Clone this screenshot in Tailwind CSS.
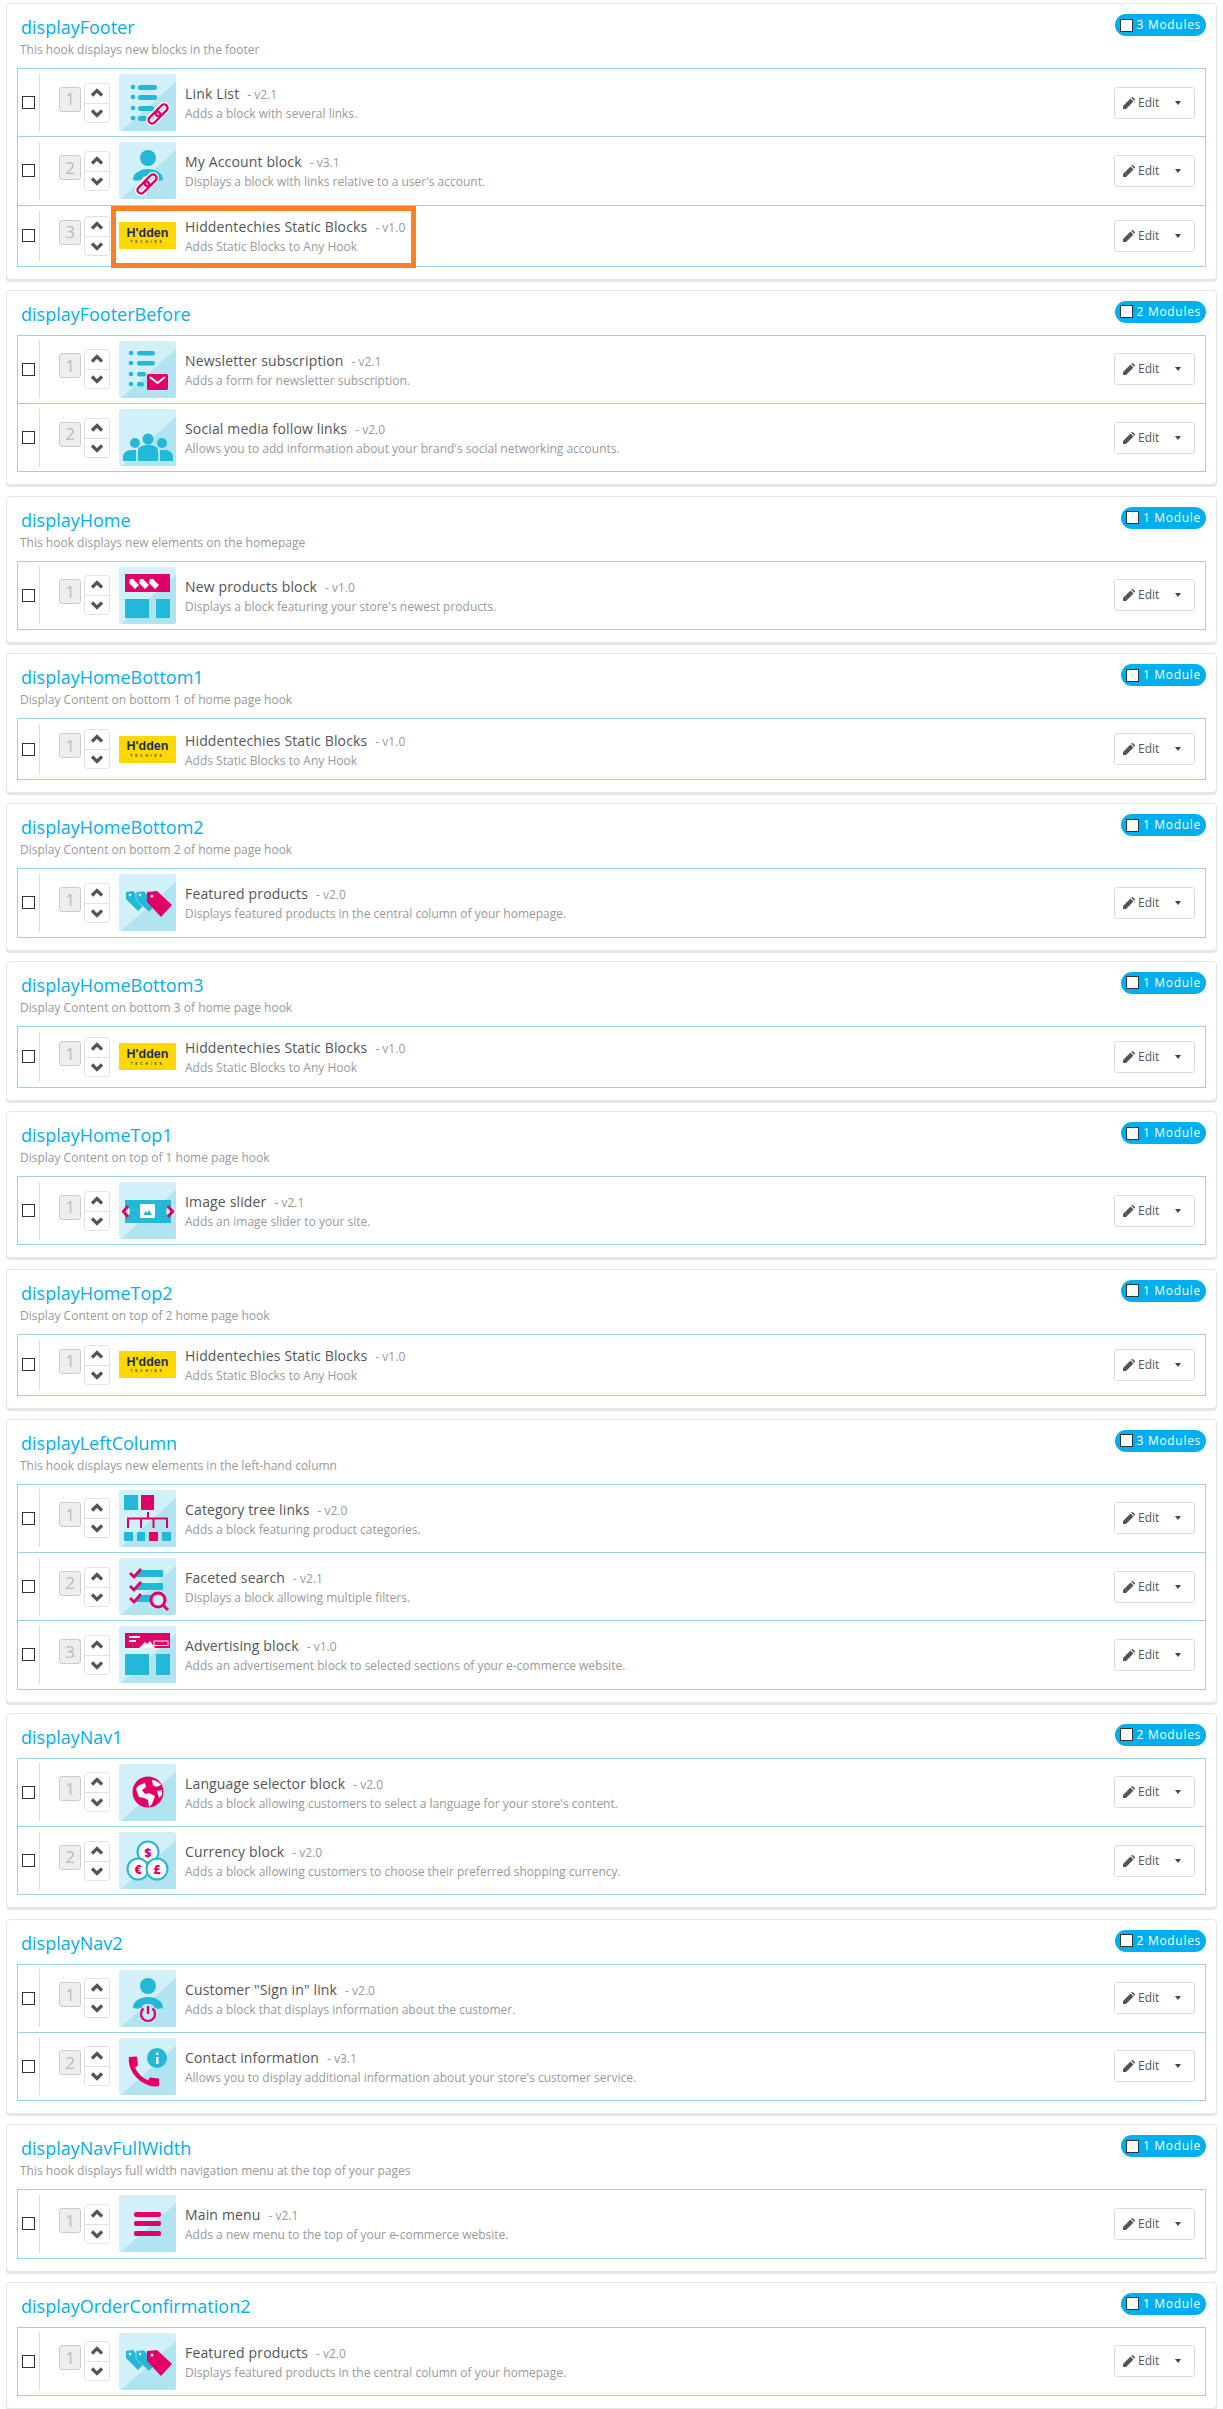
<!DOCTYPE html>
<html lang="en"><head><meta charset="utf-8"><title>Positions</title>
<script src="https://cdn.jsdelivr.net/npm/@tailwindcss/browser@4"></script></head>
<body class="bg-white font-['Open_Sans',sans-serif] text-[12px] text-[#999]">
<svg width="0" height="0" class="absolute">
<defs>
<symbol id="bg" viewBox="0 0 57 57"><rect width="57" height="57" rx="2" fill="#d2f0f7"/><path d="M57 8V55a2 2 0 0 1-2 2H2Z" fill="#afe4f0"/></symbol>
<symbol id="arrows" viewBox="0 0 26 40"><rect x=".5" y=".5" width="25" height="39" rx="3" fill="#fff" stroke="#e0e0e0"/><path d="M0 20.500H26" stroke="#e0e0e0"/><path d="M8 12.500l5-5 5 5M8 27.500l5 5 5-5" fill="none" stroke="#555" stroke-width="3.200"/></symbol>
<symbol id="pencil" viewBox="0 0 12 12"><path d="M0 12V9L7.500 1.500l3 3L3 12ZM8.300 .8l.8-.8h.6L12 2.300v.6l-.8.800Z" fill="#555"/></symbol>
<symbol id="link" viewBox="0 0 24 24"><g transform="rotate(-45 12 12)" fill="none"><g stroke="#fff" stroke-width="5"><rect x="0" y="8.500" width="14" height="7" rx="3.500"/><rect x="10" y="8.500" width="14" height="7" rx="3.500"/></g><g stroke="#e20067" stroke-width="2.400"><rect x="0" y="8.500" width="14" height="7" rx="3.500"/><rect x="10" y="8.500" width="14" height="7" rx="3.500"/></g></g></symbol>
<symbol id="linklist" viewBox="0 0 57 57"><use href="#bg"/><g fill="#23b7d8"><circle cx="14" cy="13" r="2.300"/><circle cx="14" cy="23" r="2.300"/><circle cx="14" cy="34" r="2.300"/><circle cx="14" cy="44" r="2.300"/><rect x="19" y="11" width="19" height="5" rx="2.500"/><rect x="19" y="21" width="19" height="5" rx="2.500"/><rect x="19" y="32" width="16" height="5" rx="2.500"/><rect x="19" y="42" width="9" height="5" rx="2.500"/></g><use href="#link" x="27" y="28" width="24" height="24"/></symbol>
<symbol id="account" viewBox="0 0 57 57"><use href="#bg"/><circle cx="29" cy="16" r="8" fill="#23b7d8"/><path d="M14 38c0-7 7-11 15-11s15 4 15 11c-3 1-8 1-9-1-1-3-3-3-6-3s-5 0-6 3c-1 2-6 2-9 1Z" fill="#23b7d8"/><use href="#link" x="16" y="30" width="24" height="24"/></symbol>
<symbol id="newsletter" viewBox="0 0 57 57"><use href="#bg"/><g fill="#23b7d8"><circle cx="12" cy="12" r="2.300"/><circle cx="12" cy="22" r="2.300"/><circle cx="12" cy="33" r="2.300"/><circle cx="12" cy="43" r="2.300"/><rect x="18" y="10" width="18" height="4.500" rx="2.200"/><rect x="18" y="20" width="18" height="4.500" rx="2.200"/><rect x="18" y="31" width="9" height="4.500" rx="2.200"/><rect x="18" y="41" width="7" height="4.500" rx="2.200"/></g><rect x="28" y="33" width="21" height="16" rx="1.500" fill="#e20067"/><path d="M31 36l7.500 6 7.500-6" fill="none" stroke="#fff" stroke-width="2"/></symbol>
<symbol id="social" viewBox="0 0 57 57"><use href="#bg"/><g fill="#23b7d8"><circle cx="16" cy="34" r="5"/><circle cx="29" cy="30" r="5.500"/><circle cx="43" cy="34" r="5"/><path d="M4 52v-4c0-4 4-7 8-7h5v11ZM19 52V42c0-4 4-6 10-6s10 2 10 6V52ZM41 41h5c4 0 8 3 8 7v4H41Z"/></g></symbol>
<symbol id="newproducts" viewBox="0 0 57 57"><use href="#bg"/><rect x="6" y="7" width="45" height="18" fill="#e20067"/><rect x="6" y="32" width="24" height="19" fill="#23b7d8"/><rect x="37" y="32" width="14" height="19" fill="#23b7d8"/><g fill="#fff"><path d="M11 12h3l6 6-4 4-6-6ZM21 12h3l6 6-4 4-6-6ZM31 12h3l6 6-4 4-6-6Z"/></g></symbol>
<symbol id="featured" viewBox="0 0 57 57"><use href="#bg"/><path d="M7 18l7-1 12 13-7 7-12-12Z" fill="#23b7d8"/><path d="M17 18l8-1 12 14-7 7-13-12Z" fill="#23b7d8" stroke="#b8e6f1" stroke-width=".6"/><path d="M28 18l10-1 15 14-11 12-14-15Z" fill="#e20067"/><circle cx="11" cy="21" r="1.300" fill="#fff"/><circle cx="21" cy="21" r="1.300" fill="#fff"/><circle cx="33" cy="22" r="1.500" fill="#fff"/></symbol>
<symbol id="slider" viewBox="0 0 57 57"><use href="#bg"/><rect x="6" y="18" width="46" height="23" fill="#23b7d8"/><circle cx="6" cy="29.500" r="5" fill="#d2f0f7"/><circle cx="52" cy="29.500" r="5" fill="#c4eaf3"/><path d="M9 24l-4.500 5.500L9 35M49 24l4.500 5.500L49 35" fill="none" stroke="#e20067" stroke-width="3"/><rect x="21" y="22" width="15" height="14" rx="1" fill="#fff"/><path d="M24 33l3-4 1.500 2 1.500-3 3 5Z" fill="#23b7d8"/></symbol>
<symbol id="category" viewBox="0 0 57 57"><use href="#bg"/><rect x="5" y="5" width="14" height="15" fill="#23b7d8"/><rect x="22" y="5" width="13" height="15" fill="#e20067"/><path d="M29 22v6M9 38V28.500H48V38M22 28.500V38M34.500 28.500V38" fill="none" stroke="#e20067" stroke-width="2"/><g fill="#23b7d8"><rect x="5" y="42" width="9" height="9"/><rect x="18" y="42" width="8" height="9"/><rect x="43" y="42" width="9" height="9"/></g><rect x="30" y="42" width="9" height="9" fill="#e20067"/></symbol>
<symbol id="faceted" viewBox="0 0 57 57"><use href="#bg"/><g fill="#23b7d8"><path d="M21 12H44V19H16ZM21 25H44V32H16ZM20 37H33V44H15Z"/></g><path d="M11 15l4 4 7-8M11 28l4 4 7-8M11 40l4 4 7-8" fill="none" stroke="#e20067" stroke-width="2.800"/><circle cx="39" cy="42" r="7" fill="#d2f0f7" stroke="#e20067" stroke-width="3"/><path d="M44 47l5 5" stroke="#e20067" stroke-width="3"/></symbol>
<symbol id="advert" viewBox="0 0 57 57"><use href="#bg"/><rect x="6" y="7" width="45" height="15" fill="#e20067"/><path d="M20 22l6-6 2 2 3-3 5 7Z" fill="#fff"/><rect x="10" y="10" width="11" height="2" fill="#fff"/><rect x="10" y="14" width="7" height="2" fill="#fff"/><rect x="35" y="15" width="14" height="4.500" fill="none" stroke="#fff"/><rect x="6" y="28" width="24" height="21" fill="#23b7d8"/><rect x="37" y="28" width="14" height="21" fill="#23b7d8"/></symbol>
<symbol id="globe" viewBox="0 0 57 57"><use href="#bg"/><circle cx="29" cy="28" r="15.500" fill="#e20067"/><path d="M17 25c2-4 6-5 9-6l1 4-4 3 3 4 4-1 6 3-3 8-3 3-1-7-4-2-5-1ZM33 16c3 0 7 2 9 5l-5 2-3-2ZM38 27l5-1 0 5-3 3Z" fill="#fff"/></symbol>
<symbol id="currency" viewBox="0 0 57 57"><use href="#bg"/><g fill="#fff" stroke="#23b7d8" stroke-width="2"><circle cx="29" cy="20" r="10.500"/><circle cx="19" cy="37" r="10.500"/><circle cx="38" cy="37" r="10.500"/></g><g fill="#e20067" font-family="'Open Sans',sans-serif" font-weight="800" font-size="12" text-anchor="middle"><text x="29" y="24.500">$</text><text x="19" y="41.500">€</text><text x="38" y="41.500">£</text></g></symbol>
<symbol id="signin" viewBox="0 0 57 57"><use href="#bg"/><circle cx="29" cy="16" r="8" fill="#23b7d8"/><path d="M14 38c0-7 7-11 15-11s15 4 15 11c-3 1-8 1-9-1-1-3-3-3-6-3s-5 0-6 3c-1 2-6 2-9 1Z" fill="#23b7d8"/><circle cx="29" cy="44" r="9" fill="#c4eaf3"/><path d="M24.500 38.500a7 7 0 1 0 9 0M29 36v8" fill="none" stroke="#e20067" stroke-width="2.300"/></symbol>
<symbol id="contact" viewBox="0 0 57 57"><use href="#bg"/><circle cx="38" cy="20" r="10" fill="#23b7d8"/><rect x="37" y="19" width="2.500" height="7" fill="#fff"/><rect x="37" y="14.500" width="2.500" height="2.500" fill="#fff"/><path d="M10 19l8-.5 1 9-3 2c3 6 7 10 13 13l2-3 9 1 0 7.500c-7 2-16-2-22-8S9 26 10 19Z" fill="#e20067"/></symbol>
<symbol id="menu" viewBox="0 0 57 57"><use href="#bg"/><g fill="#e20067"><rect x="15" y="17" width="27" height="5" rx="2"/><rect x="15" y="26" width="27" height="5" rx="2"/><rect x="15" y="36" width="27" height="5" rx="2"/></g></symbol>
</defs>
</svg>
<main class="px-[6px] pt-[3px] w-[1223px] flex flex-col gap-[10.250px]">

<section class="relative bg-white border border-[#e6e6e6] rounded-[4px] shadow-[0_2px_0_#e6e6e6] px-[10px] pb-[12px]">
<div class="flex items-start justify-between"><h2 class="ml-[4px] mt-[11px] text-[18px] leading-[24px] text-[#00aff0]">displayFooter</h2><div class="mt-[10px] flex items-center gap-[4px] h-[22px] rounded-full bg-[#00aff0] px-[5px] text-white tracking-[0.7px]"><span class="w-[13px] h-[13px] bg-white border border-[#333]"></span>3 Modules</div></div>
<p class="ml-[3px] mb-[7px] leading-[22px]">This hook displays new blocks in the footer</p>
<div class="border-x border-b border-[#9fd0e8]">
<div class="flex items-center h-[68.250px] border-t border-[#9fd0e8]"><span class="ml-[4px] w-[13px] h-[13px] border border-[#333] bg-white"></span><span class="ml-[4px] w-px h-[58px] bg-[#ddd]"></span><span class="ml-[19px] mb-[7px] flex items-center justify-center w-[22px] h-[25px] bg-[#eee] border border-[#ccc] rounded-[3px] text-[17px] text-[#bbb]">1</span><svg class="ml-[3px] w-[26px] h-[40px]"><use href="#arrows"/></svg><svg class="ml-[9px] w-[57px] h-[57px]"><use href="#linklist"/></svg><div class="ml-[9px] flex-1 pt-[2px]"><div class="leading-[19px]"><span class="text-[14px] tracking-[0.15px] text-[#555]">Link List</span><span class="ml-[8px]">- v2.1</span></div><div class="leading-[19px]">Adds a block with several links.</div></div><div class="mr-[10px] flex items-center w-[81px] h-[32px] border border-[#ddd] rounded-[3px] pl-[8px] text-[#555]"><svg class="w-[12px] h-[12px]"><use href="#pencil"/></svg><span class="ml-[3px]">Edit</span><span class="ml-[16px] border-x-[3.500px] border-t-[4px] border-x-transparent border-t-[#444]"></span></div></div>
<div class="flex items-center h-[68.250px] border-t border-[#9fd0e8]"><span class="ml-[4px] w-[13px] h-[13px] border border-[#333] bg-white"></span><span class="ml-[4px] w-px h-[58px] bg-[#ddd]"></span><span class="ml-[19px] mb-[7px] flex items-center justify-center w-[22px] h-[25px] bg-[#eee] border border-[#ccc] rounded-[3px] text-[17px] text-[#bbb]">2</span><svg class="ml-[3px] w-[26px] h-[40px]"><use href="#arrows"/></svg><svg class="ml-[9px] w-[57px] h-[57px]"><use href="#account"/></svg><div class="ml-[9px] flex-1 pt-[2px]"><div class="leading-[19px]"><span class="text-[14px] tracking-[0.15px] text-[#555]">My Account block</span><span class="ml-[8px]">- v3.1</span></div><div class="leading-[19px]">Displays a block with links relative to a user's account.</div></div><div class="mr-[10px] flex items-center w-[81px] h-[32px] border border-[#ddd] rounded-[3px] pl-[8px] text-[#555]"><svg class="w-[12px] h-[12px]"><use href="#pencil"/></svg><span class="ml-[3px]">Edit</span><span class="ml-[16px] border-x-[3.500px] border-t-[4px] border-x-transparent border-t-[#444]"></span></div></div>
<div class="flex items-center h-[61px] border-t border-[#9fd0e8]"><span class="ml-[4px] w-[13px] h-[13px] border border-[#333] bg-white"></span><span class="ml-[4px] w-px h-[50px] bg-[#ddd]"></span><span class="ml-[19px] mb-[7px] flex items-center justify-center w-[22px] h-[25px] bg-[#eee] border border-[#ccc] rounded-[3px] text-[17px] text-[#bbb]">3</span><svg class="ml-[3px] w-[26px] h-[40px]"><use href="#arrows"/></svg><div class="ml-[9px] w-[57px] h-[27px] bg-[#ffd800] flex flex-col items-center justify-center text-[#1a2c5a] leading-none font-['Liberation_Sans',sans-serif]"><span class="text-[12.500px] font-bold">H'dden</span><span class="text-[3px] tracking-[3px] font-bold mt-[2px]">TECHIES</span></div><div class="ml-[9px] flex-1 pt-[2px]"><div class="leading-[19px]"><span class="text-[14px] tracking-[0.15px] text-[#555]">Hiddentechies Static Blocks</span><span class="ml-[8px]">- v1.0</span></div><div class="leading-[19px]">Adds Static Blocks to Any Hook</div></div><div class="mr-[10px] flex items-center w-[81px] h-[32px] border border-[#ddd] rounded-[3px] pl-[8px] text-[#555]"><svg class="w-[12px] h-[12px]"><use href="#pencil"/></svg><span class="ml-[3px]">Edit</span><span class="ml-[16px] border-x-[3.500px] border-t-[4px] border-x-transparent border-t-[#444]"></span></div></div>
</div>
<div class="absolute left-[104px] top-[202px] w-[305px] h-[62px] border-[5px] border-[#ff7f27]"></div>
</section>

<section class="bg-white border border-[#e6e6e6] rounded-[4px] shadow-[0_2px_0_#e6e6e6] px-[10px] pb-[12px]">
<div class="flex items-start justify-between mb-[9px]"><h2 class="ml-[4px] mt-[11px] text-[18px] leading-[24px] text-[#00aff0]">displayFooterBefore</h2><div class="mt-[10px] flex items-center gap-[4px] h-[22px] rounded-full bg-[#00aff0] px-[5px] text-white tracking-[0.7px]"><span class="w-[13px] h-[13px] bg-white border border-[#333]"></span>2 Modules</div></div>
<div class="border-x border-b border-[#9fd0e8]">
<div class="flex items-center h-[68.250px] border-t border-[#9fd0e8]"><span class="ml-[4px] w-[13px] h-[13px] border border-[#333] bg-white"></span><span class="ml-[4px] w-px h-[58px] bg-[#ddd]"></span><span class="ml-[19px] mb-[7px] flex items-center justify-center w-[22px] h-[25px] bg-[#eee] border border-[#ccc] rounded-[3px] text-[17px] text-[#bbb]">1</span><svg class="ml-[3px] w-[26px] h-[40px]"><use href="#arrows"/></svg><svg class="ml-[9px] w-[57px] h-[57px]"><use href="#newsletter"/></svg><div class="ml-[9px] flex-1 pt-[2px]"><div class="leading-[19px]"><span class="text-[14px] tracking-[0.15px] text-[#555]">Newsletter subscription</span><span class="ml-[8px]">- v2.1</span></div><div class="leading-[19px]">Adds a form for newsletter subscription.</div></div><div class="mr-[10px] flex items-center w-[81px] h-[32px] border border-[#ddd] rounded-[3px] pl-[8px] text-[#555]"><svg class="w-[12px] h-[12px]"><use href="#pencil"/></svg><span class="ml-[3px]">Edit</span><span class="ml-[16px] border-x-[3.500px] border-t-[4px] border-x-transparent border-t-[#444]"></span></div></div>
<div class="flex items-center h-[68.250px] border-t border-[#9fd0e8]"><span class="ml-[4px] w-[13px] h-[13px] border border-[#333] bg-white"></span><span class="ml-[4px] w-px h-[58px] bg-[#ddd]"></span><span class="ml-[19px] mb-[7px] flex items-center justify-center w-[22px] h-[25px] bg-[#eee] border border-[#ccc] rounded-[3px] text-[17px] text-[#bbb]">2</span><svg class="ml-[3px] w-[26px] h-[40px]"><use href="#arrows"/></svg><svg class="ml-[9px] w-[57px] h-[57px]"><use href="#social"/></svg><div class="ml-[9px] flex-1 pt-[2px]"><div class="leading-[19px]"><span class="text-[14px] tracking-[0.15px] text-[#555]">Social media follow links</span><span class="ml-[8px]">- v2.0</span></div><div class="leading-[19px]">Allows you to add information about your brand's social networking accounts.</div></div><div class="mr-[10px] flex items-center w-[81px] h-[32px] border border-[#ddd] rounded-[3px] pl-[8px] text-[#555]"><svg class="w-[12px] h-[12px]"><use href="#pencil"/></svg><span class="ml-[3px]">Edit</span><span class="ml-[16px] border-x-[3.500px] border-t-[4px] border-x-transparent border-t-[#444]"></span></div></div>
</div>
</section>

<section class="bg-white border border-[#e6e6e6] rounded-[4px] shadow-[0_2px_0_#e6e6e6] px-[10px] pb-[12px]">
<div class="flex items-start justify-between"><h2 class="ml-[4px] mt-[11px] text-[18px] leading-[24px] text-[#00aff0]">displayHome</h2><div class="mt-[10px] flex items-center gap-[4px] h-[22px] rounded-full bg-[#00aff0] px-[5px] text-white tracking-[0.7px]"><span class="w-[13px] h-[13px] bg-white border border-[#333]"></span>1 Module</div></div>
<p class="ml-[3px] mb-[7px] leading-[22px]">This hook displays new elements on the homepage</p>
<div class="border-x border-b border-[#9fd0e8]">
<div class="flex items-center h-[68.250px] border-t border-[#9fd0e8]"><span class="ml-[4px] w-[13px] h-[13px] border border-[#333] bg-white"></span><span class="ml-[4px] w-px h-[58px] bg-[#ddd]"></span><span class="ml-[19px] mb-[7px] flex items-center justify-center w-[22px] h-[25px] bg-[#eee] border border-[#ccc] rounded-[3px] text-[17px] text-[#bbb]">1</span><svg class="ml-[3px] w-[26px] h-[40px]"><use href="#arrows"/></svg><svg class="ml-[9px] w-[57px] h-[57px]"><use href="#newproducts"/></svg><div class="ml-[9px] flex-1 pt-[2px]"><div class="leading-[19px]"><span class="text-[14px] tracking-[0.15px] text-[#555]">New products block</span><span class="ml-[8px]">- v1.0</span></div><div class="leading-[19px]">Displays a block featuring your store's newest products.</div></div><div class="mr-[10px] flex items-center w-[81px] h-[32px] border border-[#ddd] rounded-[3px] pl-[8px] text-[#555]"><svg class="w-[12px] h-[12px]"><use href="#pencil"/></svg><span class="ml-[3px]">Edit</span><span class="ml-[16px] border-x-[3.500px] border-t-[4px] border-x-transparent border-t-[#444]"></span></div></div>
</div>
</section>

<section class="bg-white border border-[#e6e6e6] rounded-[4px] shadow-[0_2px_0_#e6e6e6] px-[10px] pb-[12px]">
<div class="flex items-start justify-between"><h2 class="ml-[4px] mt-[11px] text-[18px] leading-[24px] text-[#00aff0]">displayHomeBottom1</h2><div class="mt-[10px] flex items-center gap-[4px] h-[22px] rounded-full bg-[#00aff0] px-[5px] text-white tracking-[0.7px]"><span class="w-[13px] h-[13px] bg-white border border-[#333]"></span>1 Module</div></div>
<p class="ml-[3px] mb-[7px] leading-[22px]">Display Content on bottom 1 of home page hook</p>
<div class="border-x border-b border-[#9fd0e8]">
<div class="flex items-center h-[61px] border-t border-[#9fd0e8]"><span class="ml-[4px] w-[13px] h-[13px] border border-[#333] bg-white"></span><span class="ml-[4px] w-px h-[50px] bg-[#ddd]"></span><span class="ml-[19px] mb-[7px] flex items-center justify-center w-[22px] h-[25px] bg-[#eee] border border-[#ccc] rounded-[3px] text-[17px] text-[#bbb]">1</span><svg class="ml-[3px] w-[26px] h-[40px]"><use href="#arrows"/></svg><div class="ml-[9px] w-[57px] h-[27px] bg-[#ffd800] flex flex-col items-center justify-center text-[#1a2c5a] leading-none font-['Liberation_Sans',sans-serif]"><span class="text-[12.500px] font-bold">H'dden</span><span class="text-[3px] tracking-[3px] font-bold mt-[2px]">TECHIES</span></div><div class="ml-[9px] flex-1 pt-[2px]"><div class="leading-[19px]"><span class="text-[14px] tracking-[0.15px] text-[#555]">Hiddentechies Static Blocks</span><span class="ml-[8px]">- v1.0</span></div><div class="leading-[19px]">Adds Static Blocks to Any Hook</div></div><div class="mr-[10px] flex items-center w-[81px] h-[32px] border border-[#ddd] rounded-[3px] pl-[8px] text-[#555]"><svg class="w-[12px] h-[12px]"><use href="#pencil"/></svg><span class="ml-[3px]">Edit</span><span class="ml-[16px] border-x-[3.500px] border-t-[4px] border-x-transparent border-t-[#444]"></span></div></div>
</div>
</section>

<section class="bg-white border border-[#e6e6e6] rounded-[4px] shadow-[0_2px_0_#e6e6e6] px-[10px] pb-[12px]">
<div class="flex items-start justify-between"><h2 class="ml-[4px] mt-[11px] text-[18px] leading-[24px] text-[#00aff0]">displayHomeBottom2</h2><div class="mt-[10px] flex items-center gap-[4px] h-[22px] rounded-full bg-[#00aff0] px-[5px] text-white tracking-[0.7px]"><span class="w-[13px] h-[13px] bg-white border border-[#333]"></span>1 Module</div></div>
<p class="ml-[3px] mb-[7px] leading-[22px]">Display Content on bottom 2 of home page hook</p>
<div class="border-x border-b border-[#9fd0e8]">
<div class="flex items-center h-[68.250px] border-t border-[#9fd0e8]"><span class="ml-[4px] w-[13px] h-[13px] border border-[#333] bg-white"></span><span class="ml-[4px] w-px h-[58px] bg-[#ddd]"></span><span class="ml-[19px] mb-[7px] flex items-center justify-center w-[22px] h-[25px] bg-[#eee] border border-[#ccc] rounded-[3px] text-[17px] text-[#bbb]">1</span><svg class="ml-[3px] w-[26px] h-[40px]"><use href="#arrows"/></svg><svg class="ml-[9px] w-[57px] h-[57px]"><use href="#featured"/></svg><div class="ml-[9px] flex-1 pt-[2px]"><div class="leading-[19px]"><span class="text-[14px] tracking-[0.15px] text-[#555]">Featured products</span><span class="ml-[8px]">- v2.0</span></div><div class="leading-[19px]">Displays featured products in the central column of your homepage.</div></div><div class="mr-[10px] flex items-center w-[81px] h-[32px] border border-[#ddd] rounded-[3px] pl-[8px] text-[#555]"><svg class="w-[12px] h-[12px]"><use href="#pencil"/></svg><span class="ml-[3px]">Edit</span><span class="ml-[16px] border-x-[3.500px] border-t-[4px] border-x-transparent border-t-[#444]"></span></div></div>
</div>
</section>

<section class="bg-white border border-[#e6e6e6] rounded-[4px] shadow-[0_2px_0_#e6e6e6] px-[10px] pb-[12px]">
<div class="flex items-start justify-between"><h2 class="ml-[4px] mt-[11px] text-[18px] leading-[24px] text-[#00aff0]">displayHomeBottom3</h2><div class="mt-[10px] flex items-center gap-[4px] h-[22px] rounded-full bg-[#00aff0] px-[5px] text-white tracking-[0.7px]"><span class="w-[13px] h-[13px] bg-white border border-[#333]"></span>1 Module</div></div>
<p class="ml-[3px] mb-[7px] leading-[22px]">Display Content on bottom 3 of home page hook</p>
<div class="border-x border-b border-[#9fd0e8]">
<div class="flex items-center h-[61px] border-t border-[#9fd0e8]"><span class="ml-[4px] w-[13px] h-[13px] border border-[#333] bg-white"></span><span class="ml-[4px] w-px h-[50px] bg-[#ddd]"></span><span class="ml-[19px] mb-[7px] flex items-center justify-center w-[22px] h-[25px] bg-[#eee] border border-[#ccc] rounded-[3px] text-[17px] text-[#bbb]">1</span><svg class="ml-[3px] w-[26px] h-[40px]"><use href="#arrows"/></svg><div class="ml-[9px] w-[57px] h-[27px] bg-[#ffd800] flex flex-col items-center justify-center text-[#1a2c5a] leading-none font-['Liberation_Sans',sans-serif]"><span class="text-[12.500px] font-bold">H'dden</span><span class="text-[3px] tracking-[3px] font-bold mt-[2px]">TECHIES</span></div><div class="ml-[9px] flex-1 pt-[2px]"><div class="leading-[19px]"><span class="text-[14px] tracking-[0.15px] text-[#555]">Hiddentechies Static Blocks</span><span class="ml-[8px]">- v1.0</span></div><div class="leading-[19px]">Adds Static Blocks to Any Hook</div></div><div class="mr-[10px] flex items-center w-[81px] h-[32px] border border-[#ddd] rounded-[3px] pl-[8px] text-[#555]"><svg class="w-[12px] h-[12px]"><use href="#pencil"/></svg><span class="ml-[3px]">Edit</span><span class="ml-[16px] border-x-[3.500px] border-t-[4px] border-x-transparent border-t-[#444]"></span></div></div>
</div>
</section>

<section class="bg-white border border-[#e6e6e6] rounded-[4px] shadow-[0_2px_0_#e6e6e6] px-[10px] pb-[12px]">
<div class="flex items-start justify-between"><h2 class="ml-[4px] mt-[11px] text-[18px] leading-[24px] text-[#00aff0]">displayHomeTop1</h2><div class="mt-[10px] flex items-center gap-[4px] h-[22px] rounded-full bg-[#00aff0] px-[5px] text-white tracking-[0.7px]"><span class="w-[13px] h-[13px] bg-white border border-[#333]"></span>1 Module</div></div>
<p class="ml-[3px] mb-[7px] leading-[22px]">Display Content on top of 1 home page hook</p>
<div class="border-x border-b border-[#9fd0e8]">
<div class="flex items-center h-[68.250px] border-t border-[#9fd0e8]"><span class="ml-[4px] w-[13px] h-[13px] border border-[#333] bg-white"></span><span class="ml-[4px] w-px h-[58px] bg-[#ddd]"></span><span class="ml-[19px] mb-[7px] flex items-center justify-center w-[22px] h-[25px] bg-[#eee] border border-[#ccc] rounded-[3px] text-[17px] text-[#bbb]">1</span><svg class="ml-[3px] w-[26px] h-[40px]"><use href="#arrows"/></svg><svg class="ml-[9px] w-[57px] h-[57px]"><use href="#slider"/></svg><div class="ml-[9px] flex-1 pt-[2px]"><div class="leading-[19px]"><span class="text-[14px] tracking-[0.15px] text-[#555]">Image slider</span><span class="ml-[8px]">- v2.1</span></div><div class="leading-[19px]">Adds an image slider to your site.</div></div><div class="mr-[10px] flex items-center w-[81px] h-[32px] border border-[#ddd] rounded-[3px] pl-[8px] text-[#555]"><svg class="w-[12px] h-[12px]"><use href="#pencil"/></svg><span class="ml-[3px]">Edit</span><span class="ml-[16px] border-x-[3.500px] border-t-[4px] border-x-transparent border-t-[#444]"></span></div></div>
</div>
</section>

<section class="bg-white border border-[#e6e6e6] rounded-[4px] shadow-[0_2px_0_#e6e6e6] px-[10px] pb-[12px]">
<div class="flex items-start justify-between"><h2 class="ml-[4px] mt-[11px] text-[18px] leading-[24px] text-[#00aff0]">displayHomeTop2</h2><div class="mt-[10px] flex items-center gap-[4px] h-[22px] rounded-full bg-[#00aff0] px-[5px] text-white tracking-[0.7px]"><span class="w-[13px] h-[13px] bg-white border border-[#333]"></span>1 Module</div></div>
<p class="ml-[3px] mb-[7px] leading-[22px]">Display Content on top of 2 home page hook</p>
<div class="border-x border-b border-[#9fd0e8]">
<div class="flex items-center h-[61px] border-t border-[#9fd0e8]"><span class="ml-[4px] w-[13px] h-[13px] border border-[#333] bg-white"></span><span class="ml-[4px] w-px h-[50px] bg-[#ddd]"></span><span class="ml-[19px] mb-[7px] flex items-center justify-center w-[22px] h-[25px] bg-[#eee] border border-[#ccc] rounded-[3px] text-[17px] text-[#bbb]">1</span><svg class="ml-[3px] w-[26px] h-[40px]"><use href="#arrows"/></svg><div class="ml-[9px] w-[57px] h-[27px] bg-[#ffd800] flex flex-col items-center justify-center text-[#1a2c5a] leading-none font-['Liberation_Sans',sans-serif]"><span class="text-[12.500px] font-bold">H'dden</span><span class="text-[3px] tracking-[3px] font-bold mt-[2px]">TECHIES</span></div><div class="ml-[9px] flex-1 pt-[2px]"><div class="leading-[19px]"><span class="text-[14px] tracking-[0.15px] text-[#555]">Hiddentechies Static Blocks</span><span class="ml-[8px]">- v1.0</span></div><div class="leading-[19px]">Adds Static Blocks to Any Hook</div></div><div class="mr-[10px] flex items-center w-[81px] h-[32px] border border-[#ddd] rounded-[3px] pl-[8px] text-[#555]"><svg class="w-[12px] h-[12px]"><use href="#pencil"/></svg><span class="ml-[3px]">Edit</span><span class="ml-[16px] border-x-[3.500px] border-t-[4px] border-x-transparent border-t-[#444]"></span></div></div>
</div>
</section>

<section class="bg-white border border-[#e6e6e6] rounded-[4px] shadow-[0_2px_0_#e6e6e6] px-[10px] pb-[12px]">
<div class="flex items-start justify-between"><h2 class="ml-[4px] mt-[11px] text-[18px] leading-[24px] text-[#00aff0]">displayLeftColumn</h2><div class="mt-[10px] flex items-center gap-[4px] h-[22px] rounded-full bg-[#00aff0] px-[5px] text-white tracking-[0.7px]"><span class="w-[13px] h-[13px] bg-white border border-[#333]"></span>3 Modules</div></div>
<p class="ml-[3px] mb-[7px] leading-[22px]">This hook displays new elements in the left-hand column</p>
<div class="border-x border-b border-[#9fd0e8]">
<div class="flex items-center h-[68.250px] border-t border-[#9fd0e8]"><span class="ml-[4px] w-[13px] h-[13px] border border-[#333] bg-white"></span><span class="ml-[4px] w-px h-[58px] bg-[#ddd]"></span><span class="ml-[19px] mb-[7px] flex items-center justify-center w-[22px] h-[25px] bg-[#eee] border border-[#ccc] rounded-[3px] text-[17px] text-[#bbb]">1</span><svg class="ml-[3px] w-[26px] h-[40px]"><use href="#arrows"/></svg><svg class="ml-[9px] w-[57px] h-[57px]"><use href="#category"/></svg><div class="ml-[9px] flex-1 pt-[2px]"><div class="leading-[19px]"><span class="text-[14px] tracking-[0.15px] text-[#555]">Category tree links</span><span class="ml-[8px]">- v2.0</span></div><div class="leading-[19px]">Adds a block featuring product categories.</div></div><div class="mr-[10px] flex items-center w-[81px] h-[32px] border border-[#ddd] rounded-[3px] pl-[8px] text-[#555]"><svg class="w-[12px] h-[12px]"><use href="#pencil"/></svg><span class="ml-[3px]">Edit</span><span class="ml-[16px] border-x-[3.500px] border-t-[4px] border-x-transparent border-t-[#444]"></span></div></div>
<div class="flex items-center h-[68.250px] border-t border-[#9fd0e8]"><span class="ml-[4px] w-[13px] h-[13px] border border-[#333] bg-white"></span><span class="ml-[4px] w-px h-[58px] bg-[#ddd]"></span><span class="ml-[19px] mb-[7px] flex items-center justify-center w-[22px] h-[25px] bg-[#eee] border border-[#ccc] rounded-[3px] text-[17px] text-[#bbb]">2</span><svg class="ml-[3px] w-[26px] h-[40px]"><use href="#arrows"/></svg><svg class="ml-[9px] w-[57px] h-[57px]"><use href="#faceted"/></svg><div class="ml-[9px] flex-1 pt-[2px]"><div class="leading-[19px]"><span class="text-[14px] tracking-[0.15px] text-[#555]">Faceted search</span><span class="ml-[8px]">- v2.1</span></div><div class="leading-[19px]">Displays a block allowing multiple filters.</div></div><div class="mr-[10px] flex items-center w-[81px] h-[32px] border border-[#ddd] rounded-[3px] pl-[8px] text-[#555]"><svg class="w-[12px] h-[12px]"><use href="#pencil"/></svg><span class="ml-[3px]">Edit</span><span class="ml-[16px] border-x-[3.500px] border-t-[4px] border-x-transparent border-t-[#444]"></span></div></div>
<div class="flex items-center h-[68.250px] border-t border-[#9fd0e8]"><span class="ml-[4px] w-[13px] h-[13px] border border-[#333] bg-white"></span><span class="ml-[4px] w-px h-[58px] bg-[#ddd]"></span><span class="ml-[19px] mb-[7px] flex items-center justify-center w-[22px] h-[25px] bg-[#eee] border border-[#ccc] rounded-[3px] text-[17px] text-[#bbb]">3</span><svg class="ml-[3px] w-[26px] h-[40px]"><use href="#arrows"/></svg><svg class="ml-[9px] w-[57px] h-[57px]"><use href="#advert"/></svg><div class="ml-[9px] flex-1 pt-[2px]"><div class="leading-[19px]"><span class="text-[14px] tracking-[0.15px] text-[#555]">Advertising block</span><span class="ml-[8px]">- v1.0</span></div><div class="leading-[19px]">Adds an advertisement block to selected sections of your e-commerce website.</div></div><div class="mr-[10px] flex items-center w-[81px] h-[32px] border border-[#ddd] rounded-[3px] pl-[8px] text-[#555]"><svg class="w-[12px] h-[12px]"><use href="#pencil"/></svg><span class="ml-[3px]">Edit</span><span class="ml-[16px] border-x-[3.500px] border-t-[4px] border-x-transparent border-t-[#444]"></span></div></div>
</div>
</section>

<section class="bg-white border border-[#e6e6e6] rounded-[4px] shadow-[0_2px_0_#e6e6e6] px-[10px] pb-[12px]">
<div class="flex items-start justify-between mb-[9px]"><h2 class="ml-[4px] mt-[11px] text-[18px] leading-[24px] text-[#00aff0]">displayNav1</h2><div class="mt-[10px] flex items-center gap-[4px] h-[22px] rounded-full bg-[#00aff0] px-[5px] text-white tracking-[0.7px]"><span class="w-[13px] h-[13px] bg-white border border-[#333]"></span>2 Modules</div></div>
<div class="border-x border-b border-[#9fd0e8]">
<div class="flex items-center h-[68.250px] border-t border-[#9fd0e8]"><span class="ml-[4px] w-[13px] h-[13px] border border-[#333] bg-white"></span><span class="ml-[4px] w-px h-[58px] bg-[#ddd]"></span><span class="ml-[19px] mb-[7px] flex items-center justify-center w-[22px] h-[25px] bg-[#eee] border border-[#ccc] rounded-[3px] text-[17px] text-[#bbb]">1</span><svg class="ml-[3px] w-[26px] h-[40px]"><use href="#arrows"/></svg><svg class="ml-[9px] w-[57px] h-[57px]"><use href="#globe"/></svg><div class="ml-[9px] flex-1 pt-[2px]"><div class="leading-[19px]"><span class="text-[14px] tracking-[0.15px] text-[#555]">Language selector block</span><span class="ml-[8px]">- v2.0</span></div><div class="leading-[19px]">Adds a block allowing customers to select a language for your store's content.</div></div><div class="mr-[10px] flex items-center w-[81px] h-[32px] border border-[#ddd] rounded-[3px] pl-[8px] text-[#555]"><svg class="w-[12px] h-[12px]"><use href="#pencil"/></svg><span class="ml-[3px]">Edit</span><span class="ml-[16px] border-x-[3.500px] border-t-[4px] border-x-transparent border-t-[#444]"></span></div></div>
<div class="flex items-center h-[68.250px] border-t border-[#9fd0e8]"><span class="ml-[4px] w-[13px] h-[13px] border border-[#333] bg-white"></span><span class="ml-[4px] w-px h-[58px] bg-[#ddd]"></span><span class="ml-[19px] mb-[7px] flex items-center justify-center w-[22px] h-[25px] bg-[#eee] border border-[#ccc] rounded-[3px] text-[17px] text-[#bbb]">2</span><svg class="ml-[3px] w-[26px] h-[40px]"><use href="#arrows"/></svg><svg class="ml-[9px] w-[57px] h-[57px]"><use href="#currency"/></svg><div class="ml-[9px] flex-1 pt-[2px]"><div class="leading-[19px]"><span class="text-[14px] tracking-[0.15px] text-[#555]">Currency block</span><span class="ml-[8px]">- v2.0</span></div><div class="leading-[19px]">Adds a block allowing customers to choose their preferred shopping currency.</div></div><div class="mr-[10px] flex items-center w-[81px] h-[32px] border border-[#ddd] rounded-[3px] pl-[8px] text-[#555]"><svg class="w-[12px] h-[12px]"><use href="#pencil"/></svg><span class="ml-[3px]">Edit</span><span class="ml-[16px] border-x-[3.500px] border-t-[4px] border-x-transparent border-t-[#444]"></span></div></div>
</div>
</section>

<section class="bg-white border border-[#e6e6e6] rounded-[4px] shadow-[0_2px_0_#e6e6e6] px-[10px] pb-[12px]">
<div class="flex items-start justify-between mb-[9px]"><h2 class="ml-[4px] mt-[11px] text-[18px] leading-[24px] text-[#00aff0]">displayNav2</h2><div class="mt-[10px] flex items-center gap-[4px] h-[22px] rounded-full bg-[#00aff0] px-[5px] text-white tracking-[0.7px]"><span class="w-[13px] h-[13px] bg-white border border-[#333]"></span>2 Modules</div></div>
<div class="border-x border-b border-[#9fd0e8]">
<div class="flex items-center h-[68.250px] border-t border-[#9fd0e8]"><span class="ml-[4px] w-[13px] h-[13px] border border-[#333] bg-white"></span><span class="ml-[4px] w-px h-[58px] bg-[#ddd]"></span><span class="ml-[19px] mb-[7px] flex items-center justify-center w-[22px] h-[25px] bg-[#eee] border border-[#ccc] rounded-[3px] text-[17px] text-[#bbb]">1</span><svg class="ml-[3px] w-[26px] h-[40px]"><use href="#arrows"/></svg><svg class="ml-[9px] w-[57px] h-[57px]"><use href="#signin"/></svg><div class="ml-[9px] flex-1 pt-[2px]"><div class="leading-[19px]"><span class="text-[14px] tracking-[0.15px] text-[#555]">Customer "Sign in" link</span><span class="ml-[8px]">- v2.0</span></div><div class="leading-[19px]">Adds a block that displays information about the customer.</div></div><div class="mr-[10px] flex items-center w-[81px] h-[32px] border border-[#ddd] rounded-[3px] pl-[8px] text-[#555]"><svg class="w-[12px] h-[12px]"><use href="#pencil"/></svg><span class="ml-[3px]">Edit</span><span class="ml-[16px] border-x-[3.500px] border-t-[4px] border-x-transparent border-t-[#444]"></span></div></div>
<div class="flex items-center h-[68.250px] border-t border-[#9fd0e8]"><span class="ml-[4px] w-[13px] h-[13px] border border-[#333] bg-white"></span><span class="ml-[4px] w-px h-[58px] bg-[#ddd]"></span><span class="ml-[19px] mb-[7px] flex items-center justify-center w-[22px] h-[25px] bg-[#eee] border border-[#ccc] rounded-[3px] text-[17px] text-[#bbb]">2</span><svg class="ml-[3px] w-[26px] h-[40px]"><use href="#arrows"/></svg><svg class="ml-[9px] w-[57px] h-[57px]"><use href="#contact"/></svg><div class="ml-[9px] flex-1 pt-[2px]"><div class="leading-[19px]"><span class="text-[14px] tracking-[0.15px] text-[#555]">Contact information</span><span class="ml-[8px]">- v3.1</span></div><div class="leading-[19px]">Allows you to display additional information about your store's customer service.</div></div><div class="mr-[10px] flex items-center w-[81px] h-[32px] border border-[#ddd] rounded-[3px] pl-[8px] text-[#555]"><svg class="w-[12px] h-[12px]"><use href="#pencil"/></svg><span class="ml-[3px]">Edit</span><span class="ml-[16px] border-x-[3.500px] border-t-[4px] border-x-transparent border-t-[#444]"></span></div></div>
</div>
</section>

<section class="bg-white border border-[#e6e6e6] rounded-[4px] shadow-[0_2px_0_#e6e6e6] px-[10px] pb-[12px]">
<div class="flex items-start justify-between"><h2 class="ml-[4px] mt-[11px] text-[18px] leading-[24px] text-[#00aff0]">displayNavFullWidth</h2><div class="mt-[10px] flex items-center gap-[4px] h-[22px] rounded-full bg-[#00aff0] px-[5px] text-white tracking-[0.7px]"><span class="w-[13px] h-[13px] bg-white border border-[#333]"></span>1 Module</div></div>
<p class="ml-[3px] mb-[7px] leading-[22px]">This hook displays full width navigation menu at the top of your pages</p>
<div class="border-x border-b border-[#9fd0e8]">
<div class="flex items-center h-[68.250px] border-t border-[#9fd0e8]"><span class="ml-[4px] w-[13px] h-[13px] border border-[#333] bg-white"></span><span class="ml-[4px] w-px h-[58px] bg-[#ddd]"></span><span class="ml-[19px] mb-[7px] flex items-center justify-center w-[22px] h-[25px] bg-[#eee] border border-[#ccc] rounded-[3px] text-[17px] text-[#bbb]">1</span><svg class="ml-[3px] w-[26px] h-[40px]"><use href="#arrows"/></svg><svg class="ml-[9px] w-[57px] h-[57px]"><use href="#menu"/></svg><div class="ml-[9px] flex-1 pt-[2px]"><div class="leading-[19px]"><span class="text-[14px] tracking-[0.15px] text-[#555]">Main menu</span><span class="ml-[8px]">- v2.1</span></div><div class="leading-[19px]">Adds a new menu to the top of your e-commerce website.</div></div><div class="mr-[10px] flex items-center w-[81px] h-[32px] border border-[#ddd] rounded-[3px] pl-[8px] text-[#555]"><svg class="w-[12px] h-[12px]"><use href="#pencil"/></svg><span class="ml-[3px]">Edit</span><span class="ml-[16px] border-x-[3.500px] border-t-[4px] border-x-transparent border-t-[#444]"></span></div></div>
</div>
</section>

<section class="bg-white border border-[#e6e6e6] rounded-[4px] shadow-[0_2px_0_#e6e6e6] px-[10px] pb-[12px]">
<div class="flex items-start justify-between mb-[9px]"><h2 class="ml-[4px] mt-[11px] text-[18px] leading-[24px] text-[#00aff0]">displayOrderConfirmation2</h2><div class="mt-[10px] flex items-center gap-[4px] h-[22px] rounded-full bg-[#00aff0] px-[5px] text-white tracking-[0.7px]"><span class="w-[13px] h-[13px] bg-white border border-[#333]"></span>1 Module</div></div>
<div class="border-x border-b border-[#9fd0e8]">
<div class="flex items-center h-[68.250px] border-t border-[#9fd0e8]"><span class="ml-[4px] w-[13px] h-[13px] border border-[#333] bg-white"></span><span class="ml-[4px] w-px h-[58px] bg-[#ddd]"></span><span class="ml-[19px] mb-[7px] flex items-center justify-center w-[22px] h-[25px] bg-[#eee] border border-[#ccc] rounded-[3px] text-[17px] text-[#bbb]">1</span><svg class="ml-[3px] w-[26px] h-[40px]"><use href="#arrows"/></svg><svg class="ml-[9px] w-[57px] h-[57px]"><use href="#featured"/></svg><div class="ml-[9px] flex-1 pt-[2px]"><div class="leading-[19px]"><span class="text-[14px] tracking-[0.15px] text-[#555]">Featured products</span><span class="ml-[8px]">- v2.0</span></div><div class="leading-[19px]">Displays featured products in the central column of your homepage.</div></div><div class="mr-[10px] flex items-center w-[81px] h-[32px] border border-[#ddd] rounded-[3px] pl-[8px] text-[#555]"><svg class="w-[12px] h-[12px]"><use href="#pencil"/></svg><span class="ml-[3px]">Edit</span><span class="ml-[16px] border-x-[3.500px] border-t-[4px] border-x-transparent border-t-[#444]"></span></div></div>
</div>
</section>

</main>
</body></html>
